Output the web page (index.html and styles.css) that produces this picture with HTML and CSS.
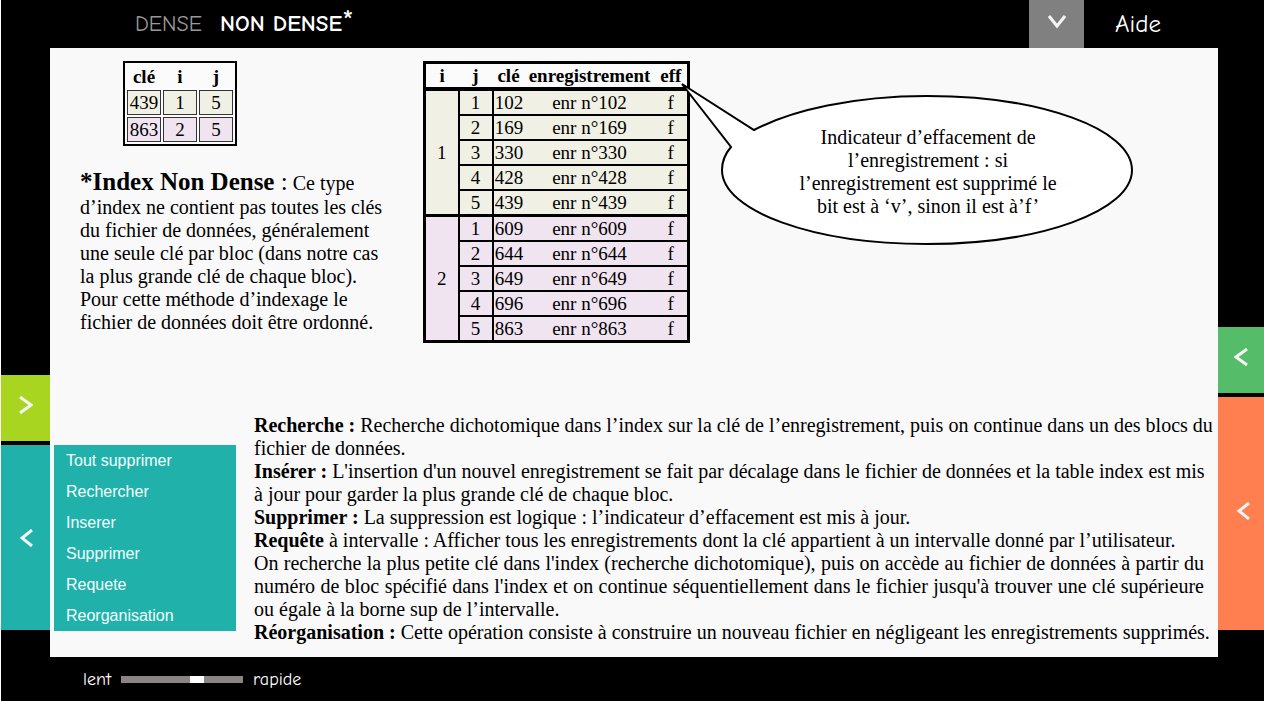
FILE: index.html
```
<!DOCTYPE html>
<html lang="fr">
<head>
<meta charset="utf-8">
<title>Index non dense</title>
<link rel="stylesheet" href="styles.css">
</head>
<body>
<header class="topbar">
  <nav class="tabs">
    <a class="tab" href="#dense">DENSE</a>
    <a class="tab tab-active" href="#non-dense">NON DENSE<span class="star">*</span></a>
  </nav>
  <button class="toggle" type="button" aria-label="Ouvrir"><svg width="18" height="14" viewBox="0 0 18 14"><path d="M1 1 9 11 17 1"/></svg></button>
  <a class="help" href="#aide">Aide</a>
</header>
<div class="middle">
  <div class="rail">
    <button class="side lime" type="button" aria-label="Afficher"><svg width="14" height="18" viewBox="0 0 14 18"><path d="M1 1 12 9 1 17"/></svg></button>
    <button class="side teal" type="button" aria-label="Masquer le menu"><svg width="14" height="18" viewBox="0 0 14 18"><path d="M12 1 2 9 12 17"/></svg></button>
  </div>
  <main class="content">
    <section class="upper">
      <div class="intro">
        <table class="index-table">
          <thead><tr><th>clé</th><th>i</th><th>j</th></tr></thead>
          <tbody>
            <tr><td class="olive">439</td><td class="olive">1</td><td class="olive">5</td></tr>
            <tr><td class="pink">863</td><td class="pink">2</td><td class="pink">5</td></tr>
          </tbody>
        </table>
        <p class="definition"><span class="title"><b>*Index Non Dense</b> :</span> Ce type<br>d’index ne contient pas toutes les clés<br>du fichier de données, généralement<br>une seule clé par bloc (dans notre cas<br>la plus grande clé de chaque bloc).<br>Pour cette méthode d’indexage le<br>fichier de données doit être ordonné.</p>
      </div>
      <table class="data-table">
        <thead><tr><th class="c-i">i</th><th class="c-i">j</th><th class="c-key">clé</th><th class="c-rec">enregistrement</th><th class="c-eff">eff</th></tr></thead>
        <tbody class="olive">
          <tr><td rowspan="5">1</td><td class="num">1</td><td>102</td><td>enr n°102</td><td>f</td></tr>
          <tr><td class="num">2</td><td>169</td><td>enr n°169</td><td>f</td></tr>
          <tr><td class="num">3</td><td>330</td><td>enr n°330</td><td>f</td></tr>
          <tr><td class="num">4</td><td>428</td><td>enr n°428</td><td>f</td></tr>
          <tr><td class="num">5</td><td>439</td><td>enr n°439</td><td>f</td></tr>
        </tbody>
        <tbody class="pink">
          <tr><td rowspan="5">2</td><td class="num">1</td><td>609</td><td>enr n°609</td><td>f</td></tr>
          <tr><td class="num">2</td><td>644</td><td>enr n°644</td><td>f</td></tr>
          <tr><td class="num">3</td><td>649</td><td>enr n°649</td><td>f</td></tr>
          <tr><td class="num">4</td><td>696</td><td>enr n°696</td><td>f</td></tr>
          <tr><td class="num">5</td><td>863</td><td>enr n°863</td><td>f</td></tr>
        </tbody>
      </table>
      <aside class="callout">
        <svg class="bubble" width="454" height="166" viewBox="0 0 454 166"><path d="M2 4 74 50C112 30 174 16 247 16C361 16 452 49 452 90C452 131 361 164 247 164C133 164 42 131 42 90C42 82 45 74 51 67Z"/></svg>
        <p class="callout-text">Indicateur d’effacement de<br>l’enregistrement : si<br>l’enregistrement est supprimé le<br>bit est à ‘v’, sinon il est à’f’</p>
      </aside>
    </section>
    <section class="lower">
      <nav class="menu">
        <button type="button">Tout supprimer</button>
        <button type="button">Rechercher</button>
        <button type="button">Inserer</button>
        <button type="button">Supprimer</button>
        <button type="button">Requete</button>
        <button type="button">Reorganisation</button>
      </nav>
      <div class="notes">
        <p class="full-line"><b>Recherche :</b> Recherche dichotomique dans l’index sur la clé de l’enregistrement, puis on continue dans un des blocs du<br>fichier de données.</p>
        <p class="full-line"><b>Insérer :</b> L'insertion d'un nouvel enregistrement se fait par décalage dans le fichier de données et la table index est mis<br>à jour pour garder la plus grande clé de chaque bloc.</p>
        <p><b>Supprimer :</b> La suppression est logique : l’indicateur d’effacement est mis à jour.</p>
        <p><b>Requête</b> à intervalle : Afficher tous les enregistrements dont la clé appartient à un intervalle donné par l’utilisateur.</p>
        <p>On recherche la plus petite clé dans l'index (recherche dichotomique), puis on accède au fichier de données à partir du numéro de bloc spécifié dans l'index et on continue séquentiellement dans le fichier jusqu'à trouver une clé supérieure ou égale à la borne sup de l’intervalle.</p>
        <p class="full-line"><b>Réorganisation :</b> Cette opération consiste à construire un nouveau fichier en négligeant les enregistrements supprimés.</p>
      </div>
    </section>
  </main>
  <div class="rail">
    <button class="side green" type="button" aria-label="Afficher"><svg width="14" height="18" viewBox="0 0 14 18"><path d="M13 1 2 9 13 17"/></svg></button>
    <button class="side coral" type="button" aria-label="Afficher"><svg width="14" height="18" viewBox="0 0 14 18"><path d="M13 1 3 9 13 17"/></svg></button>
  </div>
</div>
<footer class="speed">
  <label for="vitesse">lent</label>
  <input id="vitesse" class="slider" type="range" min="0" max="100" value="64">
  <label for="vitesse">rapide</label>
</footer>
</body>
</html>
```
FILE: styles.css
```
* { box-sizing: border-box; }
body {
  margin: 0;
  min-height: 100vh;
  display: flex;
  flex-direction: column;
  background: #000;
  border-left: 1px solid #fff;
  color: #000;
  font-family: "Liberation Serif", "Times New Roman", serif;
  font-size: 20px;
  line-height: 23px;
}
p { margin: 0; }
button { border: 0; padding: 0; cursor: pointer; font: inherit; }
svg { display: block; }
.topbar {
  display: flex;
  align-items: stretch;
  height: 48px;
  padding-right: 103px;
  font-family: "Comic Sans MS", "Comic Neue", "Open Sans", sans-serif;
  font-size: 22px;
  line-height: 48px;
}
.tabs { display: flex; flex: 1; gap: 18px; padding-left: 134px; }
.tab { color: #999; text-decoration: none; }
.tab-active { color: #fff; font-size: 23px; font-weight: bold; }
.star { font-size: 30px; font-weight: normal; line-height: 1; }
.toggle {
  display: grid;
  place-items: center;
  width: 55px;
  padding-bottom: 4px;
  background: #808080;
}
.toggle svg, .side svg { fill: none; stroke: #f4f4f4; stroke-width: 3; }
.help { padding-left: 31px; color: #fff; font-size: 25px; text-decoration: none; }

.middle { flex: 1; display: grid; grid-template-columns: 49px minmax(0, 1fr) 46px; }
.rail { display: flex; flex-direction: column; justify-content: flex-end; gap: 4px; padding-bottom: 27px; }
.side { display: grid; place-items: center; height: 66px; }
.side svg { margin-bottom: 6px; }
.lime { background: #a8d520; }
.teal { background: #20b2aa; height: 185px; }
.green { background: #55bd6a; }
.coral { background: #ff7f50; height: 233px; }
.teal svg { margin: 0 0 0 2px; }
.coral svg { margin: 0 0 6px 4px; }

.content {
  display: flex;
  flex-direction: column;
  justify-content: space-between;
  padding: 13px 14px 13px 4px;
  background: #f9f9f9;
}
.upper { display: flex; align-items: flex-start; padding-left: 26px; }
.intro { width: 343px; flex: none; }
.olive { background: #f0f1e4; }
.pink { background: #f0e4f1; }
.index-table {
  margin-left: 43px;
  border: 2px solid #000;
  border-spacing: 2px;
  background: #fbfbfb;
  font-size: 19px;
  line-height: 22px;
  text-align: center;
}
.index-table th, .index-table td { width: 34px; height: 25px; padding: 0; }
.index-table th { height: 23px; }
.index-table td { border: 1px solid #333; }
.definition { padding-top: 22px; }
.title { font-size: 25px; line-height: 28px; }

.data-table {
  flex: none;
  table-layout: fixed;
  width: 267px;
  border: 3px solid #000;
  border-collapse: collapse;
  background: #fbfbfb;
  font-size: 19px;
  text-align: center;
}
.data-table th, .data-table td { height: 25px; padding: 0; }
.data-table th { height: 26px; }
.data-table thead { border-bottom: 4px solid #000; }
.data-table tbody { border-bottom: 3px solid #000; }
.data-table tbody tr + tr td { border-top: 2px solid #000; }
.data-table .num { border-left: 2px solid #000; border-right: 2px solid #000; }
.c-i { width: 34px; }
.c-key { width: 32px; }
.c-eff { width: 34px; }

.callout { position: relative; margin: 65px 0 0 40px; width: 396px; text-align: center; }
.bubble { position: absolute; left: -50px; top: -46px; }
.bubble path { fill: #fff; stroke: #000; stroke-width: 2; }
.callout-text { position: relative; }

.lower { display: flex; align-items: flex-end; gap: 18px; }
.menu { flex: none; width: 182px; margin-bottom: 13px; background: #20b2aa; }
.menu button {
  display: block;
  width: 100%;
  height: 31px;
  padding-left: 12px;
  background: none;
  color: #f4ffff;
  font-family: "Liberation Sans", Arial, sans-serif;
  font-size: 16px;
  text-align: left;
}
.notes { flex: 1; min-width: 0; text-align: justify; }
.full-line { white-space: nowrap; }

.speed {
  display: flex;
  align-items: center;
  gap: 10px;
  height: 44px;
  padding-left: 82px;
  color: #fff;
  font-family: "Comic Sans MS", "Comic Neue", "Open Sans", sans-serif;
  font-size: 18px;
}
.slider { appearance: none; width: 122px; height: 7px; margin: 0; background: #8a8484; }
.slider::-webkit-slider-thumb { appearance: none; width: 14px; height: 7px; background: #fff; }
```
